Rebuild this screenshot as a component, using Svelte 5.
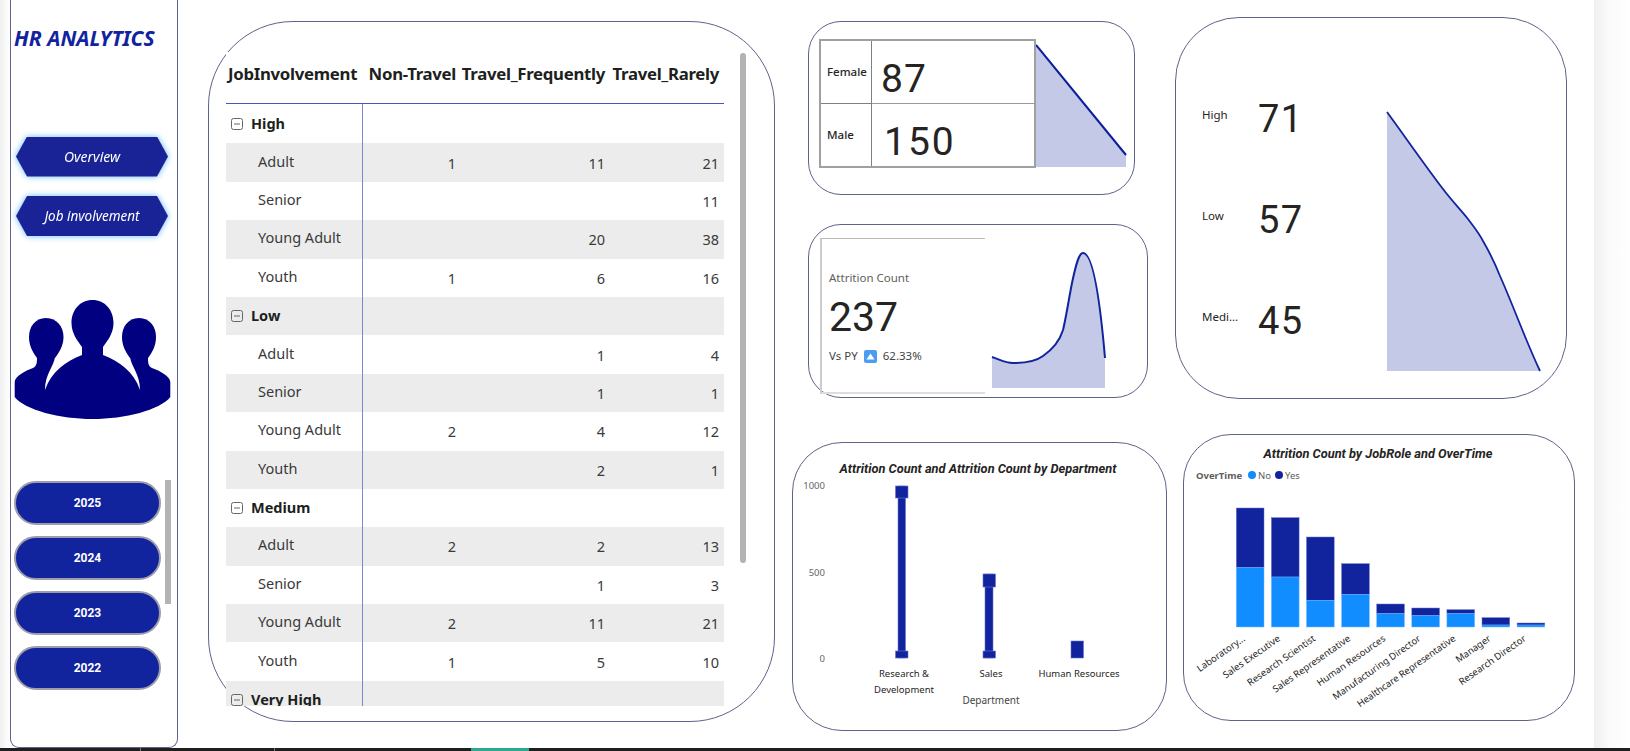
<script>
  const rows = [
    { g: 'High', k: [['Adult','1','11','21'],['Senior','','','11'],['Young Adult','','20','38'],['Youth','1','6','16']] },
    { g: 'Low', k: [['Adult','','1','4'],['Senior','','1','1'],['Young Adult','2','4','12'],['Youth','','2','1']] },
    { g: 'Medium', k: [['Adult','2','2','13'],['Senior','','1','3'],['Young Adult','2','11','21'],['Youth','1','5','10']] }
  ];
  const flat = [];
  for (const r of rows) {
    flat.push({ group: true, label: r.g, v: ['', '', ''] });
    for (const c of r.k) flat.push({ group: false, label: c[0], v: c.slice(1) });
  }
  flat.push({ group: true, label: 'Very High', v: ['', '', ''] });

  const years = ['2025', '2024', '2023', '2022'];
  const kpis = [['High', '71'], ['Low', '57'], ['Medi...', '45']];

  const roles = [
    ['Laboratory...', 250, 429], ['Sales Executive', 279, 457], ['Research Scientist', 337, 527],
    ['Sales Representative', 417, 509], ['Human Resources', 538, 567], ['Manufacturing Director', 550, 573],
    ['Healthcare Representative', 555, 567], ['Manager', 579, 601], ['Research Director', 595, 601]
  ].map((r, i) => ({
    name: r[0],
    x: 53.3 + i * 35.1,
    yes: (r[1] - 28) / 3,
    no: (r[2] - 28) / 3
  }));
  const base = (607 - 28) / 3;
</script>

<div class="page">
  <aside class="sidebar">
    <h1>HR ANALYTICS</h1>
    <nav class="navs">
      <div class="glow"><button class="hex">Overview</button></div>
      <div class="glow"><button class="hex small">Job involvement</button></div>
    </nav>
    <svg class="people" width="168" height="124" viewBox="10 298 168 124">
      <g fill="#000080">
        <path d="M46 318C57 318 63.500 327 63.500 337C63.500 345 60 351 55 358L37 358C32 351 29 345 29 337C29 327 35 318 46 318Z"/>
        <path d="M139 318C150 318 156 327 156 337C156 345 153 351 148 358L130 358C125 351 122 345 122 337C122 327 128 318 139 318Z"/>
        <path d="M92.500 300C105 300 113.500 310 113.500 323C113.500 334 107 341 103 347L103 358L82 358L82 347C78 341 71.500 334 71.500 323C71.500 310 80 300 92.500 300Z"/>
        <path d="M14.700 382C15 376 25 371 33 368C37 366 37 362 37 357L55 357C54 366 45 374 45 390C51 372 66 361 82 355L103 355C119 361 134 372 140 390C140 374 131 366 130 357L148 357C148 362 148 366 152 368C160 371 170 376 170.300 382L170.300 397C160 410 125 419 92.500 419C60 419 25 410 14.700 397Z"/>
      </g>
    </svg>
    <div class="years">
      <div class="pills">
        {#each years as y}
          <button class="pill">{y}</button>
        {/each}
      </div>
      <div class="yscroll"></div>
    </div>
  </aside>

  <section class="card tablecard">
    <div class="thumb"></div>
    <div class="matrix">
      <div class="mhead">
        <div class="c0">JobInvolvement</div>
        <div class="c1">Non-Travel</div>
        <div class="c2">Travel_Frequently</div>
        <div class="c3">Travel_Rarely</div>
      </div>
      <div class="mbody">
        {#each flat as r, i}
          <div class="row" class:band={i % 2 === 1}>
            <div class="c0" class:grp={r.group}>
              {#if r.group}
                <svg class="exp" width="12" height="12" viewBox="0 0 12 12"><rect x=".5" y=".5" width="11" height="11" rx="2" fill="none" stroke="#666"/><path d="M3 6h6" stroke="#666"/></svg>
                <span>{r.label}</span>
              {:else}
                <span class="kid">{r.label}</span>
              {/if}
            </div>
            <div class="c1 num">{r.v[0]}</div>
            <div class="c2 num">{r.v[1]}</div>
            <div class="c3 num">{r.v[2]}</div>
          </div>
        {/each}
      </div>
    </div>
  </section>

  <div class="midcol">
    <section class="card gender">
      <div class="gbox">
        <div class="glabel">Female</div><div class="gval v87">87</div>
        <div class="glabel last">Male</div><div class="gval last v150">150</div>
      </div>
      <svg class="gspark" width="93" height="129" viewBox="0 0 93 129">
        <path d="M0 6L90 116L90 128L0 128Z" fill="#c3c9e6"/>
        <path d="M0 6L90 116" fill="none" stroke="#0d1c9b" stroke-width="2"/>
      </svg>
    </section>

    <section class="card attr">
      <div class="abox">
        <div class="atitle">Attrition Count</div>
        <div class="anum">237</div>
        <div class="avs">
          <span>Vs PY</span>
          <svg width="13" height="13" viewBox="0 0 13 13"><rect width="13" height="13" rx="2" fill="#4c9cf2"/><path d="M6.500 3.500L10.500 9.500H2.500Z" fill="#fff"/></svg>
          <span>62.33%</span>
        </div>
      </div>
      <svg class="aspark" width="116" height="140" viewBox="0 0 116 140">
        <path d="M1 107C10 110 14 113 22 113C34 113 44 112 52 106C62 99 69 90 72 80C75 68 78 48 81 33C85 14 88 3 92 3C102 3 109 50 114 108L114 138L1 138Z" fill="#c3c9e6"/>
        <path d="M1 107C10 110 14 113 22 113C34 113 44 112 52 106C62 99 69 90 72 80C75 68 78 48 81 33C85 14 88 3 92 3C102 3 109 50 114 108" fill="none" stroke="#12239e" stroke-width="2"/>
      </svg>
    </section>

    <section class="card dept">
      <svg width="375" height="289" viewBox="0 0 375 289">
        <text class="ctitle" x="186" y="31" text-anchor="middle">Attrition Count and Attrition Count by Department</text>
        <g class="tick" text-anchor="end">
          <text x="33" y="47">1000</text>
          <text x="33" y="134">500</text>
          <text x="33" y="220">0</text>
        </g>
        <g fill="#12239e" stroke="#6b77c8" stroke-width=".6">
          <rect x="106" y="44" width="7.500" height="172"/>
          <rect x="103.500" y="44" width="12.500" height="12"/>
          <rect x="103.500" y="209" width="12.500" height="7"/>
          <rect x="193" y="132" width="8" height="84"/>
          <rect x="191" y="132" width="12.500" height="13"/>
          <rect x="191" y="209" width="12.500" height="7"/>
          <rect x="279" y="199" width="12.500" height="17"/>
        </g>
        <g class="xlab" text-anchor="middle">
          <text x="112" y="235">Research &amp;</text>
          <text x="112" y="250.500">Development</text>
          <text x="199" y="235">Sales</text>
          <text x="287" y="235">Human Resources</text>
        </g>
        <text class="xtitle" x="199" y="262" text-anchor="middle">Department</text>
      </svg>
    </section>
  </div>

  <div class="rightcol">
    <section class="card involve">
      <div class="ilist">
        {#each kpis as k}
          <div class="irow">
            <div class="ilabel">{k[0]}</div>
            <div class="inum">{k[1]}</div>
          </div>
        {/each}
      </div>
      <svg class="ispark" width="155" height="262" viewBox="0 0 155 262">
        <path d="M1 1C20 27 38 53 57 78C66 90 75 99 82 108C88 116 93 122 97 130C104 142 110 155 114 165C127 194 139 228 154 260L1 260Z" fill="#c3c9e6"/>
        <path d="M1 1C20 27 38 53 57 78C66 90 75 99 82 108C88 116 93 122 97 130C104 142 110 155 114 165C127 194 139 228 154 260" fill="none" stroke="#12239e" stroke-width="1.800"/>
      </svg>
    </section>

    <section class="card roles">
      <svg width="392" height="287" viewBox="0 0 392 287">
        <text class="ctitle" x="195" y="24" text-anchor="middle">Attrition Count by JobRole and OverTime</text>
        <text class="lgt" x="13" y="45">OverTime</text>
        <circle cx="69" cy="41" r="4" fill="#118dff"/>
        <text class="lg" x="75" y="45">No</text>
        <circle cx="96" cy="41" r="4" fill="#12239e"/>
        <text class="lg" x="102" y="45">Yes</text>
        {#each roles as r}
          <rect x={r.x} y={r.yes} width="27.700" height={r.no - r.yes} fill="#12239e" stroke="#6b77c8" stroke-width=".5"/>
          <rect x={r.x} y={r.no} width="27.700" height={base - r.no} fill="#118dff" stroke="#6fb9ff" stroke-width=".5"/>
          <text class="rlab" text-anchor="end" transform="translate({r.x + 9.500} {base + 13}) rotate(-35)">{r.name}</text>
        {/each}
      </svg>
    </section>
  </div>

  <div class="gutter"></div>
</div>
<div class="taskbar"><div class="seg"></div><div class="seg"></div><div class="teal"></div></div>

<style>
  :global(body) {
    margin: 0;
    background: #fff;
    overflow: hidden;
  }
  .page {
    position: relative;
    display: flex;
    width: 1630px;
    height: 748px;
    overflow: hidden;
    font-family: "Noto Sans", "Open Sans", sans-serif;
    color: #252423;
    background: linear-gradient(to right, #f0f0f0 0, #fff 10px);
  }
  button {
    font: inherit;
    padding: 0;
    border: 0;
    cursor: pointer;
  }
  .card {
    background: #fff;
    border: 1px solid #5c6488;
    box-sizing: border-box;
  }

  .sidebar {
    flex: none;
    box-sizing: border-box;
    width: 168px;
    height: 748px;
    margin-left: 10px;
    padding-top: 23px;
    background: #fff;
    border: 1px solid #5c6488;
    border-top: 0;
    border-radius: 0 0 9px 9px;
    overflow: hidden;
  }
  h1 {
    margin: 0 0 0 3px;
    font-size: 21px;
    line-height: 30px;
    font-style: italic;
    font-weight: 700;
    color: #12239e;
    white-space: nowrap;
  }
  .navs {
    display: flex;
    flex-direction: column;
    gap: 19.500px;
    margin: 83.500px 0 0 5px;
  }
  .glow {
    width: 152px;
    height: 40px;
    filter: drop-shadow(0 0 3px #62b8ff);
  }
  .hex {
    display: block;
    width: 152px;
    height: 40px;
    background: #1a2396;
    color: #fff;
    font-style: italic;
    font-size: 14px;
    clip-path: polygon(11px 0, 141px 0, 152px 50%, 141px 100%, 11px 100%, 0 50%);
  }
  .hex.small {
    font-size: 13.500px;
  }
  .people {
    display: block;
    margin: 62px 0 0 -1px;
  }
  .years {
    display: flex;
    gap: 4px;
    margin: 58px 0 0 3px;
  }
  .pills {
    display: flex;
    flex-direction: column;
    gap: 11px;
    padding-top: 1px;
  }
  .pill {
    box-sizing: border-box;
    width: 147px;
    height: 44px;
    border: 2px solid #9c9cab;
    border-radius: 22px;
    background: #12239e;
    color: #fff;
    font-family: Roboto, sans-serif;
    font-weight: 700;
    font-size: 12px;
  }
  .yscroll {
    width: 6px;
    height: 124px;
    background: #b3b3b3;
  }

  .tablecard {
    position: relative;
    flex: none;
    width: 567px;
    height: 701px;
    margin: 21px 0 0 30px;
    padding-top: 30px;
    border-radius: 85px;
  }
  .thumb {
    position: absolute;
    left: 531px;
    top: 31px;
    width: 6px;
    height: 510px;
    border-radius: 3px;
    background: #b3b3b3;
  }
  .matrix {
    width: 498px;
    margin-left: 17px;
    height: 654px;
    overflow: hidden;
    background: #fff;
  }
  .mhead {
    display: flex;
    height: 52px;
    align-items: center;
    padding-bottom: 9px;
    box-sizing: border-box;
    border-bottom: 1px solid #4a55b5;
    font-weight: 700;
    font-size: 16.800px;
    letter-spacing: -0.3px;
    color: #201f1e;
    white-space: nowrap;
  }
  .mhead .c0 { padding-left: 2px; }
  .mhead .c1, .mhead .c2, .mhead .c3 { text-align: right; }
  .c0 { width: 137px; flex: none; box-sizing: border-box; }
  .c1 { width: 95px; flex: none; box-sizing: border-box; padding-right: 2px; }
  .c2 { width: 150px; flex: none; box-sizing: border-box; padding-right: 3px; }
  .c3 { width: 116px; flex: none; box-sizing: border-box; padding-right: 5px; }
  .row {
    display: flex;
    height: 38.400px;
    align-items: center;
    font-size: 14.500px;
    color: #3a3a3a;
  }
  .row:first-child { height: 39.400px; }
  .row.band { background: #ececec; }
  .row .c0 {
    height: 100%;
    display: flex;
    align-items: center;
    border-right: 1px solid #7c86d6;
    padding-bottom: 4px;
  }
  .row .c0.grp {
    padding-bottom: 2px;
    font-weight: 700;
    color: #201f1e;
  }
  .exp { margin: 2px 8px 0 5px; flex: none; }
  .kid { padding-left: 32px; }
  .num { text-align: right; }

  .midcol {
    flex: none;
    width: 375px;
    margin-left: 17px;
  }
  .gender {
    display: flex;
    width: 327px;
    height: 174px;
    margin: 21px 0 0 16px;
    padding: 17px 0 0 10px;
    border-radius: 33px;
  }
  .gbox {
    display: grid;
    grid-template-columns: 51px 1fr;
    grid-template-rows: 1fr 1fr;
    box-sizing: border-box;
    width: 217px;
    height: 129px;
    border: 2px solid #a0a0a0;
    flex: none;
  }
  .glabel {
    display: flex;
    align-items: center;
    padding: 0 0 0 6px;
    font-size: 11.500px;
    font-weight: 500;
    border-right: 1px solid #808080;
    border-bottom: 1px solid #808080;
  }
  .gval {
    display: flex;
    align-items: center;
    padding: 14px 0 0 9px;
    font-family: Roboto, sans-serif;
    font-size: 39px;
    letter-spacing: 1px;
    border-bottom: 1px solid #999;
  }
  .gval.v150 { padding-left: 12px; letter-spacing: 2px; }
  .glabel.last, .gval.last { border-bottom: 0; }
  .gspark { flex: none; }
  .attr {
    display: flex;
    width: 340px;
    height: 174px;
    margin: 29px 0 0 16px;
    padding: 13px 0 0 11px;
    border-radius: 33px;
  }
  .abox {
    flex: none;
    box-sizing: border-box;
    width: 165px;
    height: 156px;
    border-top: 1px solid #bbb;
    border-left: 2px solid #ccc;
    border-bottom: 2px solid #ddd;
    padding: 31px 0 0 7px;
  }
  .atitle { font-size: 11.500px; line-height: 16px; color: #605e5c; }
  .anum {
    font-family: Roboto, sans-serif;
    font-size: 41px;
    line-height: 48px;
    margin-top: 7px;
  }
  .avs {
    display: flex;
    align-items: center;
    gap: 6px;
    margin-top: 7px;
    font-size: 11.500px;
    line-height: 16px;
    color: #444;
  }
  .aspark { flex: none; margin: 12px 0 0 5.500px; }
  .dept {
    width: 375px;
    height: 289px;
    margin-top: 44px;
    border-radius: 50px;
  }
  .dept svg, .roles svg { display: block; margin: -1px; }
  .ctitle {
    font-family: Roboto, sans-serif;
    font-size: 12.800px;
    font-weight: 700;
    font-style: italic;
    fill: #252423;
  }
  .tick text {
    font-size: 9.500px;
    fill: #666;
  }
  .xlab text {
    font-size: 9.500px;
    fill: #252423;
  }
  .xtitle {
    font-size: 10px;
    fill: #444;
  }

  .rightcol {
    flex: none;
    width: 400px;
    margin-left: 8px;
  }
  .involve {
    display: flex;
    width: 392px;
    height: 382px;
    margin-top: 17px;
    border-radius: 64px;
  }
  .ilist {
    flex: none;
    width: 210px;
    padding: 72px 0 0 26px;
    box-sizing: border-box;
  }
  .irow {
    display: flex;
    align-items: center;
    height: 48px;
    margin-bottom: 53px;
  }
  .ilabel {
    width: 56px;
    font-size: 11.500px;
    color: #252423;
  }
  .inum {
    padding-top: 10px;
    font-family: Roboto, sans-serif;
    font-size: 38px;
    letter-spacing: 1.500px;
  }
  .ispark { flex: none; margin: 93px 0 0 0; }
  .roles {
    width: 392px;
    height: 287px;
    margin: 35px 0 0 8px;
    border-radius: 48px;
  }
  .lgt { font-size: 9.500px; font-weight: 700; fill: #605e5c; }
  .lg { font-size: 9.500px; fill: #605e5c; }
  .rlab { font-size: 9.500px; fill: #252423; }

  .gutter {
    position: absolute;
    left: 1594px;
    top: 0;
    width: 36px;
    height: 748px;
    background: linear-gradient(to right, #efefef, #fafafa 14px, #fff);
  }
  .taskbar {
    position: relative;
    display: flex;
    height: 3px;
    background: #1f1f1f;
  }
  .seg {
    width: 134px;
    height: 3px;
    box-sizing: border-box;
    border-right: 1px solid #777;
  }
  .seg:first-child { width: 141px; }
  .teal {
    width: 58px;
    height: 3px;
    margin-left: 196px;
    background: #2fa88f;
  }
</style>
